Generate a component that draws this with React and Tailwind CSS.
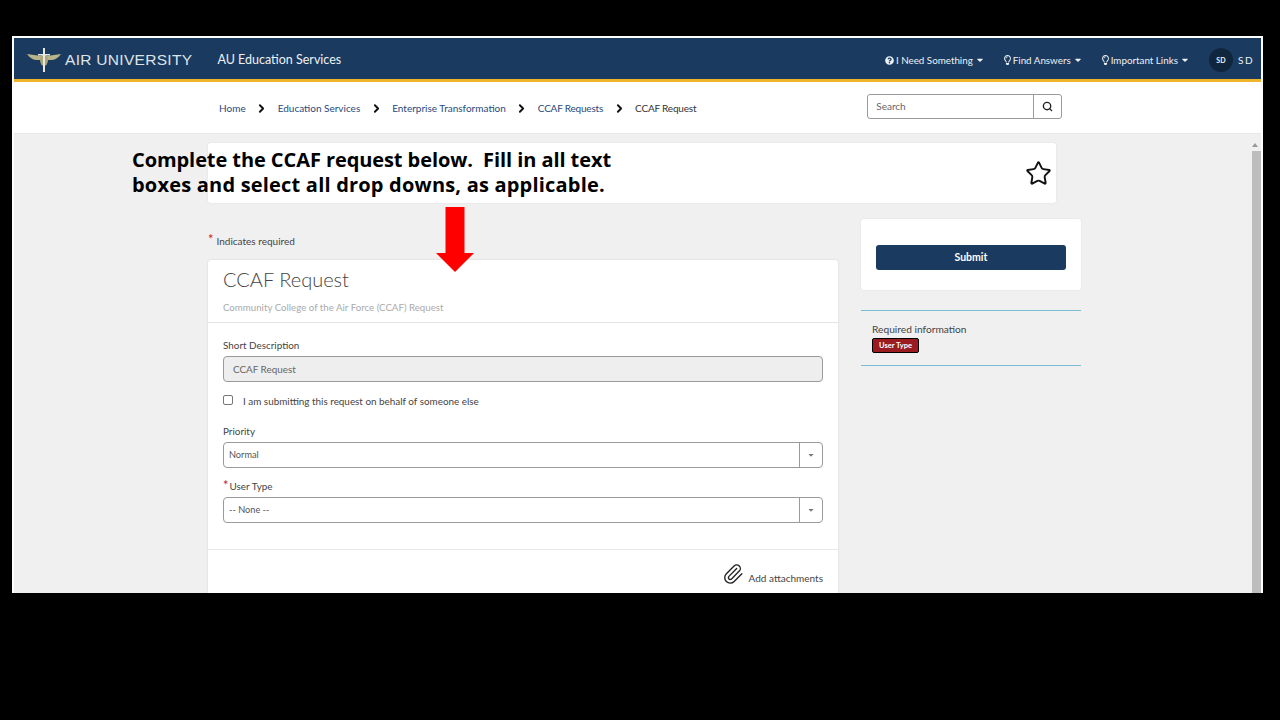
import React from "react";
import { Search, Star, Paperclip, ChevronRight } from "lucide-react";
import { FaQuestionCircle, FaRegLightbulb, FaCaretDown } from "react-icons/fa";

const font = { fontFamily: "Lato, sans-serif" };

const crumbs = ["Home", "Education Services", "Enterprise Transformation"];
const menus = [
  { label: "I Need Something", icon: <FaQuestionCircle size={9} /> },
  { label: "Find Answers", icon: <FaRegLightbulb size={10} className="w-[7px]" /> },
  { label: "Important Links", icon: <FaRegLightbulb size={10} className="w-[7px]" /> },
];

const Wings = () => (
  <svg width="34" height="24" viewBox="0 0 34 24">
    <path d="M0 6 L14 8 L14 12 L10 12 C6 12 3 10 0 6 Z" fill="#b9b48a" />
    <path d="M34 6 L20 8 L20 12 L24 12 C28 12 31 10 34 6 Z" fill="#b9b48a" />
    <ellipse cx="17" cy="12" rx="4" ry="6" fill="#a8a47c" />
    <rect x="16" y="0" width="2" height="24" fill="#e8e8e0" />
    <rect x="11" y="6" width="12" height="1.5" fill="#e8e8e0" />
  </svg>
);

const Dropdown = ({ value }) => (
  <div className="flex h-[26px] items-center rounded-[4px] border border-[#9a9a9a] bg-white">
    <span className="flex-1 pl-[5px] text-[9.2px] text-[#555]">{value}</span>
    <span className="flex h-full w-[23px] items-center justify-center border-l border-[#9a9a9a] text-[#777]">
      <FaCaretDown size={8} />
    </span>
  </div>
);

const Crumb = () => <ChevronRight size={13} strokeWidth={3.5} className="mx-[9.5px] text-[#111]" />;

export default function App() {
  return (
    <div className="h-[720px] w-[1280px] overflow-hidden bg-black pl-[12px] pt-[36px]" style={font}>
      <div className="relative flex h-[557px] w-[1251px] flex-col overflow-hidden border-2 border-b-0 border-white">
        {/* top bar */}
        <header className="flex h-[44px] shrink-0 items-center border-b-[3px] border-[#f0b429] bg-[#1a3a5f] pl-[13px] pr-[9px] pt-[3px] text-white">
          <Wings />
          <span
            className="ml-[4px] text-[15.5px] font-light tracking-[0.3px] text-[#dfe3e8]"
            style={{ fontFamily: "'Liberation Sans', sans-serif" }}
          >
            AIR UNIVERSITY
          </span>
          <span className="ml-[25px] text-[12.5px] text-[#eef1f4]">AU Education Services</span>
          <nav className="ml-auto flex items-center text-[9.8px] text-[#eef1f4]">
            {menus.map((m) => (
              <span key={m.label} className="mr-[21px] flex items-center gap-[2px]">
                {m.icon}
                {m.label}
                <FaCaretDown size={10} className="ml-[2px] w-[6px]" />
              </span>
            ))}
            <span className="mr-[5px] flex h-[24px] w-[24px] items-center justify-center rounded-full bg-[#10263f] text-[7px] font-bold">
              SD
            </span>
            <span className="text-[10px] tracking-[-0.5px]">S D</span>
          </nav>
        </header>

        {/* breadcrumb */}
        <div className="flex h-[52px] shrink-0 items-center border-b border-[#e8e8e8] bg-white pl-[205px]">
          <div className="mt-[2px] flex items-center text-[10px] text-[#1f4a7c]">
            {crumbs.map((c) => (
              <React.Fragment key={c}>
                <span>{c}</span>
                <Crumb />
              </React.Fragment>
            ))}
            <span className="tracking-[-0.2px]">CCAF Requests</span>
            <Crumb />
            <span className="tracking-[-0.2px] text-[#333]">CCAF Request</span>
          </div>
          <div className="ml-[171px] mt-[-3px] flex h-[25px] w-[195px] rounded-[3px] border border-[#9a9a9a] text-[10px] text-[#666]">
            <span className="flex flex-1 items-center pl-[8px]">Search</span>
            <span className="flex w-[28px] items-center justify-center border-l border-[#9a9a9a] text-[#222]">
              <Search size={11} strokeWidth={3} />
            </span>
          </div>
        </div>

        {/* page body */}
        <main className="flex-1 bg-[#f0f0f0] pl-[194px] pt-[9px]">
          <div className="flex h-[60px] w-[848px] items-center justify-end rounded-[3px] bg-white pr-[4px] shadow-[0_0_2px_#ddd]">
            <Star size={27} strokeWidth={1.7} className="text-[#111]" />
          </div>
          <div className="flex">
            <div className="w-[630px]">
              <p className="mt-[30px] flex h-[17px] items-center text-[10px] text-[#444]">
                <span className="mr-[3px] mt-[-3px] text-[13px] text-[#c0272d]">*</span>
                Indicates required
              </p>
              <section className="mt-[10px] h-[400px] rounded-[3px] bg-white shadow-[0_0_2px_#ccc]">
                <div className="h-[63px] border-b border-[#e4e4e4] px-[15px] pt-[4px]">
                  <h1 className="text-[20px] font-light leading-[30px] text-[#444]">CCAF Request</h1>
                  <p className="mt-[6px] text-[9.7px] text-[#aaa]">Community College of the Air Force (CCAF) Request</p>
                </div>
                <div className="h-[227px] border-b border-[#e8e8e8] px-[15px] pt-[15px] text-[9.9px] text-[#444]">
                  <label className="block leading-[14px]">Short Description</label>
                  <div className="mt-[4px] flex h-[26px] items-center rounded-[4px] border border-[#9a9a9a] bg-[#eeeeee] pl-[9px] text-[#666]">
                    CCAF Request
                  </div>
                  <div className="mt-[12px] flex h-[14px] items-center">
                    <span className="mt-[-2px] h-[10px] w-[10px] rounded-[2px] border border-[#777] bg-white" />
                    <span className="ml-[10px]">I am submitting this request on behalf of someone else</span>
                  </div>
                  <label className="mt-[16px] block leading-[14px]">Priority</label>
                  <div className="mt-[4px]">
                    <Dropdown value="Normal" />
                  </div>
                  <label className="mt-[11px] block leading-[14px]">
                    <span className="mr-[1px] text-[13px] leading-[10px] text-[#c0272d]">*</span>User Type
                  </label>
                  <div className="mt-[4px]">
                    <Dropdown value="-- None --" />
                  </div>
                </div>
                <div className="flex items-end justify-end px-[15px] pt-[13px] text-[10px] leading-[14px] text-[#444]">
                  <Paperclip size={22} strokeWidth={1.5} className="mr-[5px] text-[#222]" />
                  Add attachments
                </div>
              </section>
            </div>

            <aside className="ml-[23px] w-[220px] pt-[16px]">
              <div className="h-[71px] rounded-[3px] bg-white px-[15px] pt-[26px] shadow-[0_0_2px_#ddd]">
                <button className="block h-[25px] w-full rounded-[3px] bg-[#1a3a5f] text-[10.5px] font-bold text-white">
                  Submit
                </button>
              </div>
              <div className="mt-[20px] h-[56px] border-y border-[#7fbdd6] pl-[11px] pt-[11px]">
                <p className="text-[10.2px] leading-[14px] text-[#444]">Required information</p>
                <span className="mt-[2px] flex h-[15px] w-[47px] items-center justify-center rounded-[2px] border border-black bg-[#9b1c20] text-[7.5px] font-bold text-white">
                  User Type
                </span>
              </div>
            </aside>
          </div>
        </main>

        {/* scrollbar */}
        <div className="absolute bottom-0 right-0 top-[96px] w-[12px] bg-[#f0f0f0]">
          <div className="mx-auto mt-[9px] h-0 w-0 border-x-[3px] border-b-[4px] border-x-transparent border-b-[#999]" />
          <div className="ml-[3px] mt-[4px] h-[500px] w-[9px] bg-[#bdbdbd]" />
        </div>

        {/* slide annotations */}
        <p
          className="absolute left-[118px] top-[109px] whitespace-pre text-[20px] font-bold leading-[25px] text-black"
          style={{ fontFamily: "'Open Sans', sans-serif" }}
        >
          <span className="block tracking-[-0.08px]">Complete the CCAF request below.  Fill in all text</span>
          <span className="block tracking-[0.2px]">boxes and select all drop downs, as applicable.</span>
        </p>
        <svg className="absolute left-[422px] top-[169px]" width="38" height="65" viewBox="0 0 38 65">
          <path d="M9.5 0 H28.5 V46 H38 L19 65 L0 46 H9.5 Z" fill="#ff0000" />
        </svg>
      </div>
    </div>
  );
}
